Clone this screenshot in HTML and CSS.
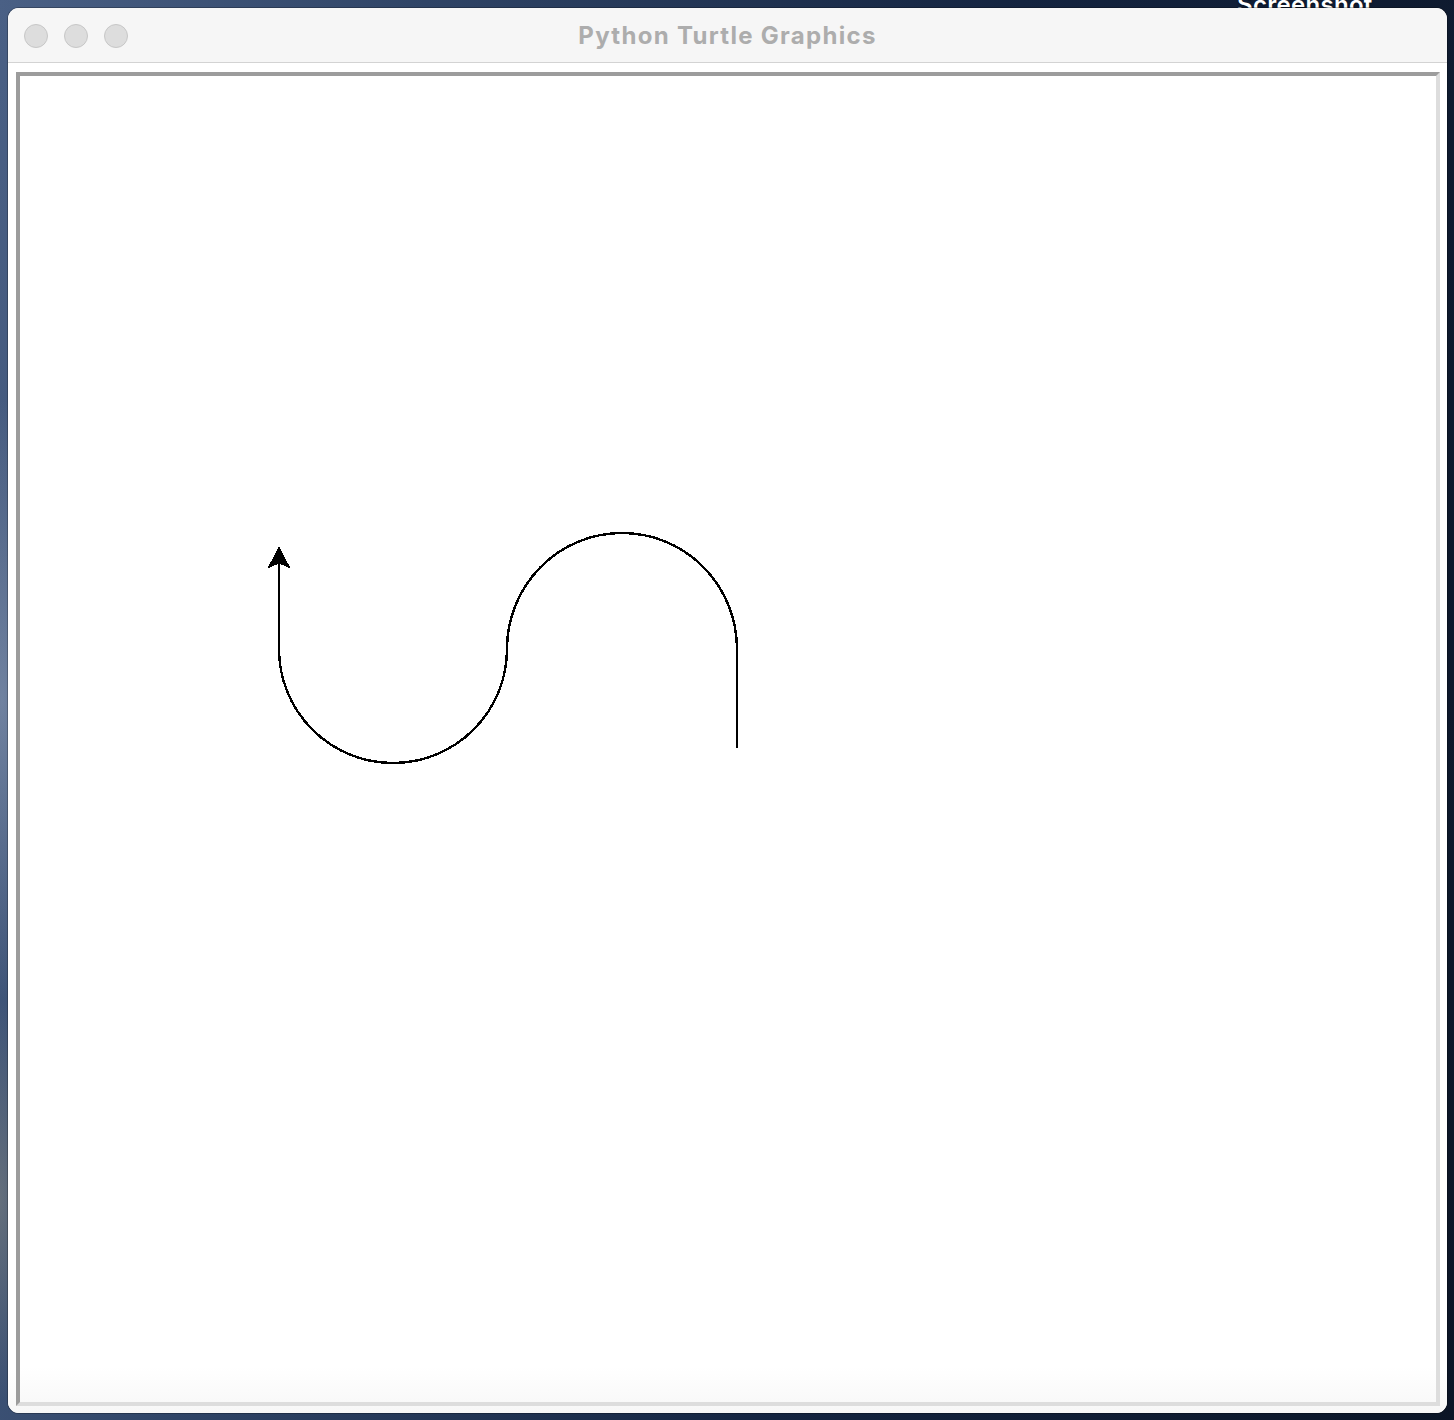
FILE: index.html
```html
<!DOCTYPE html>
<html lang="en">
<head>
<meta charset="utf-8">
<title>Python Turtle Graphics</title>
<link rel="stylesheet" href="styles.css">
</head>
<body>
  <div class="desktop-label">Screenshot</div>
  <div class="window">
    <div class="titlebar">
      <div class="lights">
        <span class="light"></span>
        <span class="light"></span>
        <span class="light"></span>
      </div>
      <div class="title">Python Turtle Graphics</div>
      <div class="spacer"></div>
    </div>
    <div class="content">
      <div class="canvas">
        <svg class="drawing" viewBox="20 76 1416 1326" preserveAspectRatio="none" xmlns="http://www.w3.org/2000/svg">
          <path d="M737 748 L737 649 A115 116 0 0 0 507 649 A114 114 0 0 1 279 649 L279 562" fill="none" stroke="#000" stroke-width="2.4" shape-rendering="crispEdges"/>
          <polygon points="279,547 268.5,567.5 279,563 289.5,567.5" fill="#000" stroke="#000" stroke-width="1" stroke-linejoin="miter" shape-rendering="crispEdges"/>
        </svg>
      </div>
    </div>
  </div>
</body>
</html>
```

FILE: styles.css
```css
html, body {
  margin: 0;
  padding: 0;
}

body {
  width: 1454px;
  height: 1420px;
  overflow: hidden;
  position: relative;
  background:
    radial-gradient(ellipse 60px 300px at 2px 700px, rgba(150, 165, 190, 0.55), transparent),
    radial-gradient(ellipse 40px 200px at 0px 1200px, rgba(140, 140, 130, 0.5), transparent),
    linear-gradient(100deg, #4a6085 0%, #2f4466 25%, #142440 60%, #0b1526 100%);
  font-family: "Inter", "Liberation Sans", sans-serif;
}

.desktop-label {
  position: absolute;
  left: 1237px;
  top: -7px;
  font-family: "Inter", "Liberation Sans", sans-serif;
  font-weight: 600;
  font-size: 24px;
  line-height: 24px;
  letter-spacing: 0.3px;
  color: #ffffff;
  text-shadow: 0 1px 2px rgba(0, 0, 0, 0.6);
  z-index: 0;
}

.window {
  position: relative;
  z-index: 1;
  margin: 8px 0 0 8px;
  width: 1439px;
  height: 1405px;
  border-radius: 11px;
  background: #ffffff;
  overflow: hidden;
  display: flex;
  flex-direction: column;
  box-shadow: 0 0 0 1px rgba(0, 0, 0, 0.25);
}

.titlebar {
  height: 54px;
  flex: none;
  background: #f6f6f6;
  border-bottom: 1px solid #d3d3d3;
  display: grid;
  grid-template-columns: 1fr auto 1fr;
  align-items: center;
}

.lights {
  display: flex;
  gap: 16px;
  padding-left: 16px;
  padding-top: 1px;
}

.light {
  width: 22px;
  height: 22px;
  border-radius: 50%;
  background: #dddddd;
  border: 1px solid #c7c7c7;
}

.title {
  font-family: "Inter", "Liberation Sans", sans-serif;
  font-weight: 700;
  font-size: 24px;
  letter-spacing: 1.3px;
  color: #adadad;
  line-height: 1;
  padding-top: 1px;
}

.content {
  flex: 1;
  min-height: 0;
  padding: 9px 7px 7px 8px;
  display: flex;
  background: linear-gradient(to bottom, #ffffff calc(100% - 45px), #f7f7f7 100%);
}

.canvas {
  flex: 1;
  border-style: solid;
  border-width: 4px;
  border-color: #9c9c9c #dddddd #dddddd #9c9c9c;
  background: linear-gradient(to bottom, #ffffff calc(100% - 35px), #f9f9f9 100%);
  display: flex;
}

.drawing {
  display: block;
  width: 100%;
  height: 100%;
}
```
